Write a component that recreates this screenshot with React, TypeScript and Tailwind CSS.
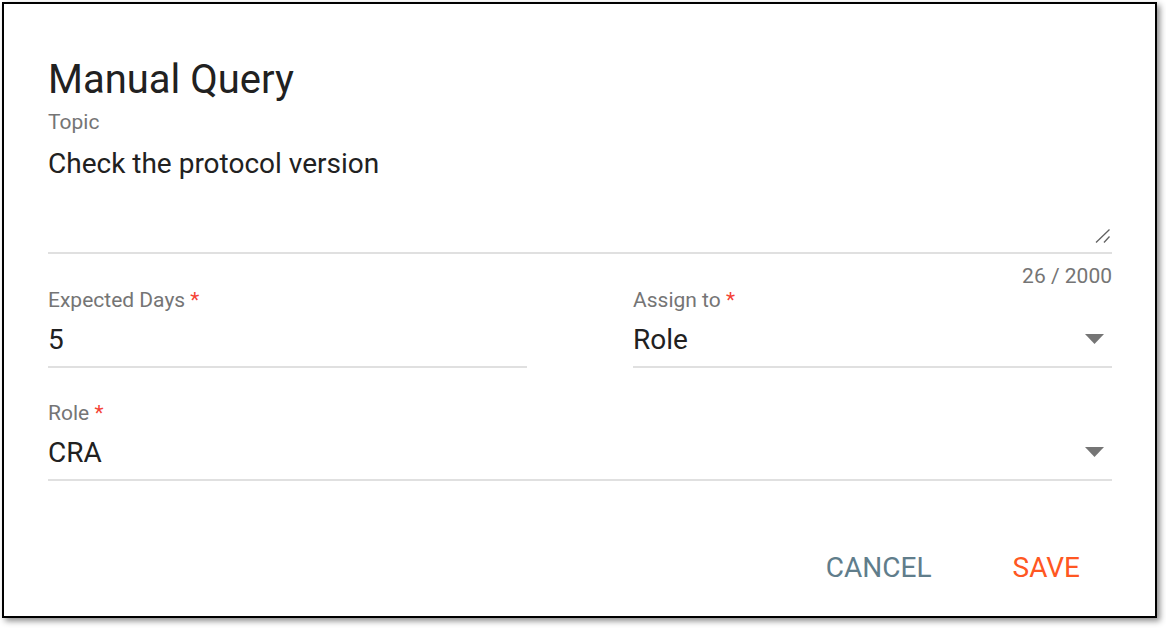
import React from 'react';

function Arrow() {
  return (
    <svg width="19" height="10" viewBox="0 0 19 10" className="shrink-0">
      <path d="M0 0 L19 0 L9.5 10 Z" fill="#757575" />
    </svg>
  );
}

function Label({ text, required }: { text: string; required?: boolean }) {
  return (
    <div className="text-[21px] leading-none text-[#757575] h-[21px]">
      {text}
      {required && <span className="text-[#f44336]"> *</span>}
    </div>
  );
}

function TextField({ label, value, select }: { label: string; value: string; select?: boolean }) {
  return (
    <div className="flex flex-col">
      <Label text={label} required />
      <div className="mt-[15px] flex items-center justify-between h-[28px]">
        <span className="text-[28px] leading-none text-[#212121]">{value}</span>
        {select && (
          <div className="mr-[8px] mt-[-2px]">
            <Arrow />
          </div>
        )}
      </div>
      <div className="mt-[12px] h-[2px] bg-[#e0e0e0]" />
    </div>
  );
}

export default function App() {
  return (
    <div className="w-[1166px] h-[628px] bg-white pt-[2px] pl-[2px] font-['Roboto',sans-serif]">
      <div className="w-[1155px] h-[616px] border-2 border-black bg-white shadow-[3px_3px_6px_rgba(0,0,0,0.45)] pl-[44px] pr-[43px] pt-[56px]">
        <h1 className="text-[40px] leading-none text-[#212121] h-[40px]">Manual Query</h1>

        <div className="mt-[12px]">
          <Label text="Topic" />
        </div>
        <div className="mt-[17px] text-[28px] leading-none text-[#212121] h-[28px]">
          Check the protocol version
        </div>
        <div className="h-[74px] flex items-end justify-end pb-[9px]">
          <svg width="16" height="14" viewBox="0 0 16 14" className="mr-[1px]">
            <path d="M1 13.5 L14.5 0.5" stroke="#616161" strokeWidth="1.3" />
            <path d="M9 13.5 L14.5 7.5" stroke="#616161" strokeWidth="1.3" />
          </svg>
        </div>
        <div className="h-[2px] bg-[#e0e0e0]" />
        <div className="mt-[12px] text-right text-[21px] leading-none text-[#757575] h-[21px]">26 / 2000</div>

        <div className="mt-[3px] grid grid-cols-2 gap-x-[106px]">
          <TextField label="Expected Days" value="5" />
          <TextField label="Assign to" value="Role" select />
        </div>

        <div className="mt-[35px]">
          <TextField label="Role" value="CRA" select />
        </div>

        <div className="mt-[73px] flex justify-end items-center gap-[81px] pr-[32px]">
          <button className="text-[28px] leading-none text-[#607d8b]">CANCEL</button>
          <button className="text-[28px] leading-none text-[#ff5722]">SAVE</button>
        </div>
      </div>
    </div>
  );
}
